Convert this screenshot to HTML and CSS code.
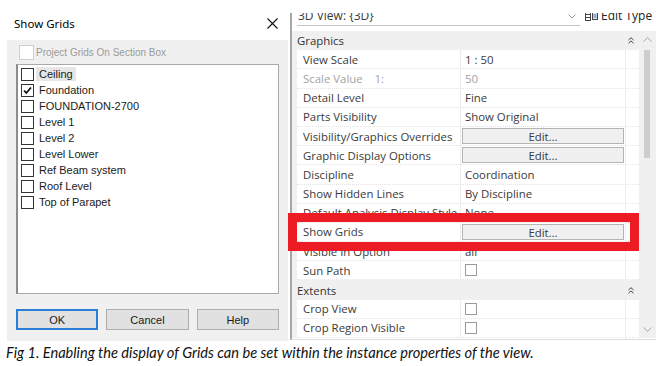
FILE: index.html
```html
<!DOCTYPE html>
<html lang="en">
<head>
  <meta charset="UTF-8" />
  <title>Show Grids</title>
  <link rel="stylesheet" href="styles.css">
</head>
<body>
  <div class="shot">
    <!-- Show Grids dialog -->
    <div class="dialog">
      <div class="dialog-title">
        <span>Show Grids</span>
        <svg class="close" width="11" height="11" viewBox="0 0 11 11">
          <path d="M0.5 0.5 L10.5 10.5 M10.5 0.5 L0.5 10.5" stroke="#111" stroke-width="1.1" fill="none" />
        </svg>
      </div>
      <div class="dialog-body">
        <div class="section-box"><span class="cb cb-off"></span>Project Grids On Section Box</div>
        <ul class="grid-list">
          <li><span class="cb"></span><span class="name focus">Ceiling</span></li>
          <li><span class="cb"><svg width="11" height="11" viewBox="0 0 11 11"><path d="M2 5.5 L4.3 8 L9 2.5" stroke="#111" stroke-width="1.8" fill="none" /></svg></span><span class="name">Foundation</span></li>
          <li><span class="cb"></span><span class="name">FOUNDATION-2700</span></li>
          <li><span class="cb"></span><span class="name">Level 1</span></li>
          <li><span class="cb"></span><span class="name">Level 2</span></li>
          <li><span class="cb"></span><span class="name">Level Lower</span></li>
          <li><span class="cb"></span><span class="name">Ref Beam system</span></li>
          <li><span class="cb"></span><span class="name">Roof Level</span></li>
          <li><span class="cb"></span><span class="name">Top of Parapet</span></li>
        </ul>
        <div class="buttons">
          <button class="btn default">OK</button>
          <button class="btn">Cancel</button>
          <button class="btn">Help</button>
        </div>
      </div>
    </div>

    <!-- Properties palette -->
    <div class="props">
      <div class="type-row">
        <div class="type-select">
          <span>3D View: {3D}</span>
          <svg class="chev" width="8" height="5" viewBox="0 0 8 5"><path d="M0.5 0.5 L4 4 L7.5 0.5" stroke="#999" fill="none" /></svg>
        </div>
        <div class="edit-type">
          <svg width="13" height="10" viewBox="0 0 13 10">
            <rect x="0.5" y="0.5" width="5" height="9" fill="none" stroke="#444" />
            <path d="M0.5 3.5 H5.5 M0.5 6.5 H5.5" stroke="#444" />
            <rect x="7.5" y="1.5" width="5" height="7" fill="#dfe6ef" stroke="#444" />
            <path d="M8.5 4 H11.5 M8.5 6 H11.5" stroke="#3b6fb5" />
          </svg>
          <span>Edit Type</span>
        </div>
      </div>
      <div class="props-main">
        <div class="prop-table">
          <div class="group">Graphics
            <svg class="fold" width="6" height="7" viewBox="0 0 6 7"><path d="M0.5 3 L3 0.7 L5.5 3 M0.5 6.2 L3 3.9 L5.5 6.2" stroke="#444" fill="none" /></svg>
          </div>
          <div class="row"><div class="key">View Scale</div><div class="val">1 : 50</div><div class="end"></div></div>
          <div class="row muted"><div class="key">Scale Value&nbsp;&nbsp;&nbsp; 1:</div><div class="val">50</div><div class="end"></div></div>
          <div class="row"><div class="key">Detail Level</div><div class="val">Fine</div><div class="end"></div></div>
          <div class="row"><div class="key">Parts Visibility</div><div class="val">Show Original</div><div class="end"></div></div>
          <div class="row"><div class="key">Visibility/Graphics Overrides</div><div class="val"><span class="edit">Edit...</span></div><div class="end"></div></div>
          <div class="row"><div class="key">Graphic Display Options</div><div class="val"><span class="edit">Edit...</span></div><div class="end"></div></div>
          <div class="row"><div class="key">Discipline</div><div class="val">Coordination</div><div class="end"></div></div>
          <div class="row"><div class="key">Show Hidden Lines</div><div class="val">By Discipline</div><div class="end"></div></div>
          <div class="row"><div class="key">Default Analysis Display Style</div><div class="val">None</div><div class="end"></div></div>
          <div class="row"><div class="key">Show Grids</div><div class="val"><span class="edit">Edit...</span></div><div class="end"></div></div>
          <div class="row"><div class="key">Visible In Option</div><div class="val">all</div><div class="end"></div></div>
          <div class="row"><div class="key">Sun Path</div><div class="val"><span class="box"></span></div><div class="end"></div></div>
          <div class="group">Extents
            <svg class="fold" width="6" height="7" viewBox="0 0 6 7"><path d="M0.5 3 L3 0.7 L5.5 3 M0.5 6.2 L3 3.9 L5.5 6.2" stroke="#444" fill="none" /></svg>
          </div>
          <div class="row"><div class="key">Crop View</div><div class="val"><span class="box"></span></div><div class="end"></div></div>
          <div class="row"><div class="key">Crop Region Visible</div><div class="val"><span class="box"></span></div><div class="end"></div></div>
        </div>
        <div class="scrollbar">
          <svg class="arrow" width="9" height="5" viewBox="0 0 9 5"><path d="M0.5 4.5 L4.5 0.7 L8.5 4.5" stroke="#a6a6a6" fill="none" /></svg>
          <div class="track"><div class="thumb"></div></div>
          <svg class="arrow" width="9" height="5" viewBox="0 0 9 5"><path d="M0.5 0.5 L4.5 4.3 L8.5 0.5" stroke="#a6a6a6" fill="none" /></svg>
        </div>
      </div>
    </div>

    <!-- annotation over the Show Grids row -->
    <div class="highlight"></div>
  </div>

  <p class="caption">Fig 1. Enabling the display of Grids can be set within the instance properties of the view.</p>
</body>
</html>
```

FILE: styles.css
```css
/* ===== Page ===== */
body {
  margin: 0;
  background: #fff;
  font-family: "Open Sans", sans-serif;
}
.shot {
  position: relative;
  display: flex;
  height: 341px;
}

/* ===== Dialog ===== */
.dialog {
  width: 290px;
  flex: none;
  display: flex;
  flex-direction: column;
  font-family: "Liberation Sans", Arial, sans-serif;
  font-size: 11px;
  color: #1a1a1a;
}
.dialog-title {
  height: 40px;
  display: flex;
  align-items: center;
  justify-content: space-between;
  padding: 7px 12px 0 14px;
  box-sizing: border-box;
  font-family: "Noto Sans", sans-serif;
  font-size: 11.5px;
  color: #000;
}
.dialog-body {
  flex: 1;
  margin: 0 2px 0 7px;
  padding: 4px 9px 0 9px;
  background: #f0f0f0;
}
.section-box {
  height: 16px;
  display: flex;
  align-items: center;
  gap: 2px;
  padding-left: 3px;
  font-size: 10px;
  color: #9a9a9a;
}
.cb {
  width: 11px;
  height: 11px;
  border: 1px solid #333;
  background: #fff;
  flex: none;
  display: flex;
}
.cb-off {
  width: 13px;
  height: 13px;
  border-color: #cfcfcf;
}
.grid-list {
  list-style: none;
  margin: 4px 0 0 0;
  padding: 1px 0 0 3px;
  height: 230px;
  box-sizing: border-box;
  background: #fff;
  border: 1px solid #a9a9a9;
  border-left: 2px solid #8c8c8c;
}
.grid-list li {
  height: 16px;
  display: flex;
  align-items: center;
}
.grid-list .name {
  margin-left: 2px;
  padding: 0 3px;
  line-height: 14px;
}
.grid-list .focus {
  background: #e6e6e6;
}
.buttons {
  display: grid;
  grid-template-columns: 1fr 1fr 1fr;
  gap: 8px;
  margin-top: 15px;
}
.btn {
  height: 21px;
  padding: 0;
  font-family: "Liberation Sans", Arial, sans-serif;
  font-size: 11px;
  color: #1a1a1a;
  background: #e1e1e1;
  border: 1px solid #adadad;
}
.btn.default {
  border: 2px solid #2a7fd4;
}

/* ===== Properties palette ===== */
.props {
  margin-top: 13px;
  height: 327px;
  width: 366px;
  flex: none;
  overflow: hidden;
  box-sizing: border-box;
  border-left: 2px solid #a7a7a7;
  border-bottom: 1px solid #dcdcdc;
  font-size: 11.4px;
  color: #3a3a3a;
}
.type-row {
  height: 18px;
  display: flex;
  align-items: flex-start;
  white-space: nowrap;
}
.type-select {
  margin: -6px 0 0 5px;
  width: 279px;
  height: 18px;
  line-height: 18px;
  border-bottom: 1px solid #c6c6c6;
  display: flex;
  justify-content: space-between;
  align-items: center;
  padding-right: 4px;
  flex: none;
  font-size: 12px;
}
.type-select span {
  padding-left: 1px;
}
.edit-type {
  margin: -6px 0 0 5px;
  height: 18px;
  line-height: 18px;
  display: flex;
  align-items: center;
  gap: 3px;
  flex: none;
  font-size: 12px;
  color: #222;
}
.props-main {
  display: flex;
}
.prop-table {
  width: 347px;
}
.group {
  height: 19.2px;
  display: flex;
  align-items: center;
  justify-content: space-between;
  padding: 0 5px;
  background: #f0f0f0;
  color: #333;
}
.row {
  height: 19.2px;
  display: flex;
  padding-left: 5px;
  background: #f0f0f0;
}
.row > div {
  background: #fff;
  border-bottom: 1px dotted #e4e4e4;
  box-sizing: border-box;
  display: flex;
  align-items: center;
}
.key {
  width: 164px;
  padding-left: 6px;
  border-right: 1px solid #ececec;
  white-space: nowrap;
}
.val {
  width: 165px;
  padding: 0 1px 0 4px;
  border-right: 1px solid #ececec;
}
.end {
  flex: 1;
}
.muted {
  color: #a3a3a3;
}
.edit {
  flex: 1;
  height: 16px;
  margin-left: -3px;
  line-height: 15px;
  text-align: center;
  background: #f0f0f0;
  border: 1px solid #b4b4b4;
  box-sizing: border-box;
}
.box {
  width: 12px;
  height: 12px;
  border: 1px solid #9a9a9a;
  box-sizing: border-box;
}
.scrollbar {
  width: 17px;
  height: 307px;
  background: #f0f0f0;
  display: flex;
  flex-direction: column;
  align-items: center;
}
.scrollbar .arrow {
  margin: 6px 0;
}
.track {
  flex: 1;
  width: 100%;
  display: flex;
  justify-content: center;
}
.thumb {
  width: 6px;
  height: 108px;
  margin: 2px 2px 0 0;
  background: #cdcdcd;
}

/* ===== Annotation ===== */
.highlight {
  position: absolute;
  left: 288px;
  top: 213px;
  width: 351px;
  height: 38px;
  border: 9px solid #ed1c24;
  box-sizing: border-box;
}

/* ===== Caption ===== */
.caption {
  margin: 3px 0 0 6px;
  font-family: Lato, sans-serif;
  font-style: italic;
  font-size: 14.6px;
  color: #111;
}
```
